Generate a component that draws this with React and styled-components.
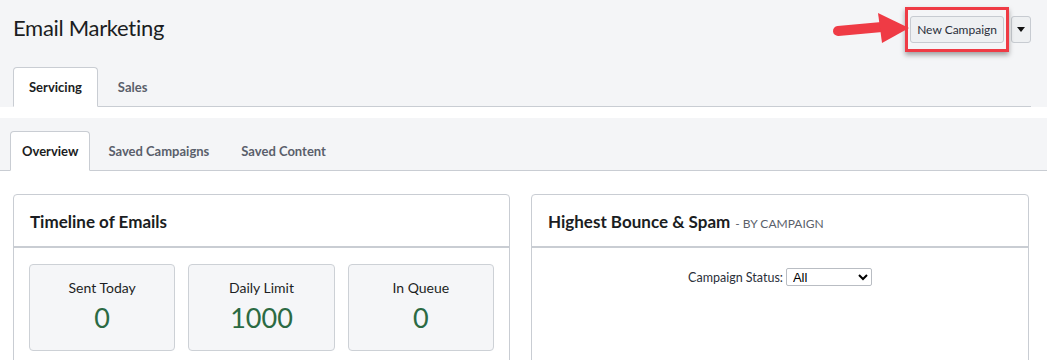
import React from "react";
import styled, { createGlobalStyle } from "styled-components";

const Global = createGlobalStyle`
  html, body { margin: 0; padding: 0; background: #fff; }
  body { font-family: "Lato", "Open Sans", sans-serif; color: #1d1f24; }
  * { box-sizing: border-box; }
`;

const Header = styled.div`
  background: #f4f5f7;
  padding: 0 16px 0 13px;
`;

const TitleBar = styled.div`
  height: 67px;
  display: flex;
  align-items: center;
  justify-content: space-between;
`;

const Title = styled.h1`
  margin: 0;
  font-size: 22px;
  letter-spacing: -0.3px;
  font-weight: 400;
  color: #1b1d22;
  position: relative;
  top: -6px;
`;

const Actions = styled.div`
  display: flex;
  align-items: center;
  gap: 2px;
  position: relative;
  top: -4px;
`;

const Highlight = styled.div`
  border: 3px solid #ef3b45;
  padding: 6px 2px;
  box-shadow: 0 3px 5px rgba(0, 0, 0, 0.35);
  position: relative;
`;

const Button = styled.button`
  font-family: inherit;
  font-size: 12px;
  color: #2b2f3a;
  background: #eef0f2;
  border: 1px solid #c7cbd1;
  border-radius: 3px;
  height: 27px;
  padding: 0 6px;
  display: flex;
  align-items: center;
  cursor: pointer;
`;

const Caret = styled(Button)`
  width: 20px;
  padding: 0;
  justify-content: center;
`;

const Arrow = styled.svg`
  position: absolute;
  right: 100%;
  top: 2px;
  margin-right: -2px;
`;

const TabRow = styled.div`
  display: flex;
  align-items: flex-end;
  border-bottom: 1px solid #c9cdd3;
  padding-left: ${(p) => p.$indent}px;
  height: ${(p) => p.$height}px;
`;

const Tab = styled.div`
  height: 40px;
  margin-bottom: -1px;
  padding: 0 ${(p) => p.$pad}px;
  display: flex;
  align-items: center;
  font-size: 13px;
  font-weight: 700;
  color: ${(p) => (p.$active ? "#1b1d22" : "#5a5f6b")};
  background: ${(p) => (p.$active ? "#fff" : "transparent")};
  border: 1px solid ${(p) => (p.$active ? "#c9cdd3" : "transparent")};
  border-bottom: 1px solid ${(p) => (p.$active ? "#fff" : "transparent")};
  border-radius: 4px 4px 0 0;
`;

const Spacer = styled.div`
  height: 11px;
  background: #fff;
`;

const SubNav = styled.div`
  background: #f4f5f7;
`;

const Content = styled.div`
  display: grid;
  grid-template-columns: 497px 498px;
  gap: 21px;
  padding: 23px 19px 0 13px;
`;

const Card = styled.div`
  border: 1px solid #c9cdd3;
  border-radius: 4px;
  height: 200px;
  background: #fff;
`;

const CardHeader = styled.div`
  height: 53px;
  display: flex;
  padding: 16px 16px 0;
  border-bottom: 2px solid #c9cdd3;
  gap: 5px;
  align-items: baseline;
`;

const CardTitle = styled.span`
  font-size: 17px;
  font-weight: 700;
  color: #1b1d22;
`;

const CardSub = styled.span`
  font-size: 12px;
  color: #5a5f6b;
  text-transform: uppercase;
`;

const Stats = styled.div`
  display: grid;
  grid-template-columns: repeat(3, 1fr);
  gap: 13px;
  padding: 16px 15px;
`;

const Stat = styled.div`
  background: #f5f6f8;
  border: 1px solid #cdd1d6;
  border-radius: 4px;
  height: 87px;
  display: flex;
  flex-direction: column;
  align-items: center;
  padding-top: 14px;
`;

const StatLabel = styled.div`
  font-size: 14px;
  color: #1d1f24;
`;

const StatValue = styled.div`
  font-size: 27px;
  color: #2b6a43;
  margin-top: 5px;
`;

const Filter = styled.div`
  display: flex;
  justify-content: center;
  align-items: center;
  gap: 3px;
  padding-top: 20px;
  font-size: 12.5px;
  color: #2b2f3a;
`;

const Select = styled.select`
  width: 86px;
  height: 18px;
  font-family: "Liberation Sans", Arial, sans-serif;
  font-size: 13px;
  border: 1px solid #b9bdc3;
  border-radius: 2px;
  background: #fff;
  padding: 0 2px;
`;

export default function App() {
  return (
    <>
      <Global />
      <Header>
        <TitleBar>
          <Title>Email Marketing</Title>
          <Actions>
            <Highlight>
              <Arrow width="78" height="32" viewBox="0 0 78 32">
                <path d="M6 19 L50 15" stroke="#ef3b45" strokeWidth="10" strokeLinecap="round" fill="none" />
                <path d="M46 1 L77 16 L50 31 Z" fill="#ef3b45" />
              </Arrow>
              <Button>New Campaign</Button>
            </Highlight>
            <Caret aria-label="more">
              <svg width="8" height="5" viewBox="0 0 8 5"><path d="M0 0 L8 0 L4 5 Z" fill="#111" /></svg>
            </Caret>
          </Actions>
        </TitleBar>
        <TabRow $indent={0} $height={40}>
          <Tab $active $pad={15}>Servicing</Tab>
          <Tab $pad={19}>Sales</Tab>
        </TabRow>
      </Header>
      <Spacer />
      <SubNav>
        <TabRow $indent={10} $height={53}>
          <Tab $active $pad={11}>Overview</Tab>
          <Tab $pad={17}>Saved Campaigns</Tab>
          <Tab $pad={13}>Saved Content</Tab>
        </TabRow>
      </SubNav>
      <Content>
        <Card>
          <CardHeader>
            <CardTitle>Timeline of Emails</CardTitle>
          </CardHeader>
          <Stats>
            <Stat>
              <StatLabel>Sent Today</StatLabel>
              <StatValue>0</StatValue>
            </Stat>
            <Stat>
              <StatLabel>Daily Limit</StatLabel>
              <StatValue>1000</StatValue>
            </Stat>
            <Stat>
              <StatLabel>In Queue</StatLabel>
              <StatValue>0</StatValue>
            </Stat>
          </Stats>
        </Card>
        <Card>
          <CardHeader>
            <CardTitle>Highest Bounce &amp; Spam</CardTitle>
            <CardSub>- By Campaign</CardSub>
          </CardHeader>
          <Filter>
            Campaign Status:
            <Select defaultValue="All">
              <option>All</option>
            </Select>
          </Filter>
        </Card>
      </Content>
    </>
  );
}
